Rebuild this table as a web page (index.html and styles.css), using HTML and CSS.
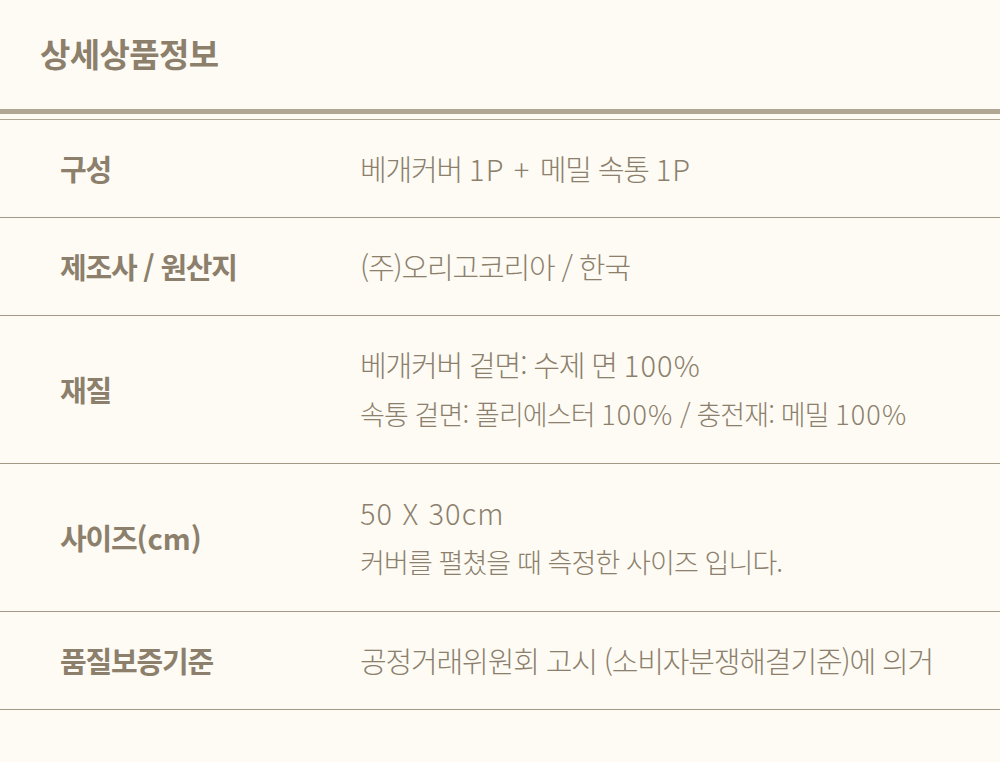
FILE: index.html
```html
<!DOCTYPE html>
<html lang="ko">
<head>
<meta charset="utf-8">
<link rel="stylesheet" href="styles.css">
</head>
<body>
<div class="page">
  <header class="head"><h1 class="title">상세상품정보</h1></header>
  <div class="rule"></div>
  <div class="table">
    <div class="row">
      <div class="label">구성</div>
      <div class="value"><p>베개커버 <span class="en">1P + </span>메밀 속통 <span class="en">1P</span></p></div>
    </div>
    <div class="row">
      <div class="label">제조사 / 원산지</div>
      <div class="value"><p>(주)오리고코리아 / 한국</p></div>
    </div>
    <div class="row">
      <div class="label">재질</div>
      <div class="value"><p>베개커버 겉면: 수제 면 <span class="en">100%</span></p><p class="sub">속통 겉면: 폴리에스터 <span class="en">100%</span> / 충전재: 메밀 <span class="en">100%</span></p></div>
    </div>
    <div class="row">
      <div class="label">사이즈<span class="en-b">(cm)</span></div>
      <div class="value"><p><span class="en">50 X 30cm</span></p><p class="sub">커버를 펼쳤을 때 측정한 사이즈 입니다.</p></div>
    </div>
    <div class="row">
      <div class="label">품질보증기준</div>
      <div class="value"><p>공정거래위원회 고시 (소비자분쟁해결기준)에 의거</p></div>
    </div>
  </div>
</div>
</body>
</html>
```
FILE: styles.css
```css
html, body {
  margin: 0;
  padding: 0;
  background: #fdfbf4;
}
body {
  font-family: "Noto Sans CJK KR", "Noto Sans", sans-serif;
  color: #8c7f6c;
}
.page {
  width: 1000px;
  height: 762px;
  background: #fdfbf4;
}
.head {
  padding: 33px 40px 36px;
}
.title {
  margin: 0;
  font-size: 33px;
  line-height: 40px;
  font-weight: 700;
  letter-spacing: -0.6px;
}
.rule {
  height: 5px;
  background: #b1a593;
  margin-bottom: 5px;
}
.table {
  border-top: 1px solid #b1a593;
}
.row {
  display: flex;
  padding: 23px 0 24px;
  border-bottom: 1px solid #a39989;
}
.label {
  box-sizing: border-box;
  width: 360px;
  flex: none;
  padding-left: 60px;
  font-size: 29px;
  font-weight: 700;
  display: flex;
  align-items: center;
  letter-spacing: -1.2px;
}
.en-b {
  letter-spacing: 0;
}
.value {
  flex: 1;
}
.value p {
  margin: 0;
  font-size: 29px;
  font-weight: 300;
  line-height: 50px;
  letter-spacing: -1.15px;
}
.value p.sub {
  font-size: 27px;
  letter-spacing: -0.9px;
}
.en {
  letter-spacing: 1.1px;
}
```
